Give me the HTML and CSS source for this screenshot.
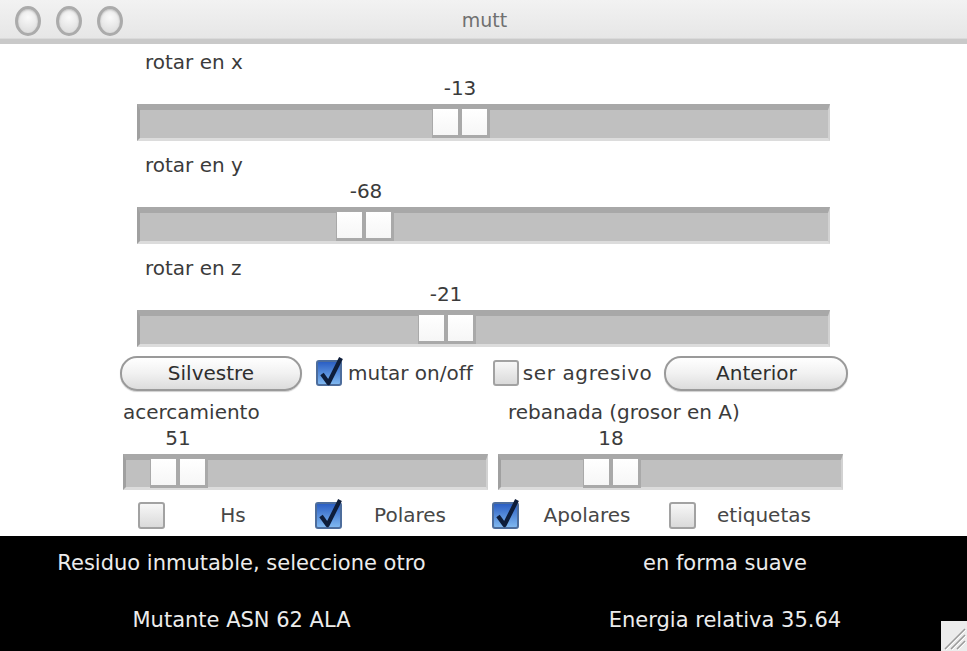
FILE: index.html
```html
<!DOCTYPE html>
<html lang="es">
<head>
<meta charset="utf-8">
<title>mutt</title>
<link rel="stylesheet" href="styles.css">
</head>
<body>
<div class="window">
  <header class="titlebar">
    <div class="lights">
      <span class="light"></span>
      <span class="light"></span>
      <span class="light"></span>
    </div>
    <div class="title">mutt</div>
  </header>

  <main class="content">
    <section class="slider-group wide">
      <div class="label">rotar en x</div>
      <div class="value"><span style="left:323px">-13</span></div>
      <div class="track"><div class="thumb" style="left:292px"><i></i><i></i></div></div>
    </section>
    <section class="slider-group wide">
      <div class="label">rotar en y</div>
      <div class="value"><span style="left:229px">-68</span></div>
      <div class="track"><div class="thumb" style="left:196px"><i></i><i></i></div></div>
    </section>
    <section class="slider-group wide">
      <div class="label">rotar en z</div>
      <div class="value"><span style="left:309px">-21</span></div>
      <div class="track"><div class="thumb" style="left:278px"><i></i><i></i></div></div>
    </section>

    <div class="controls">
      <button class="pill btn-silvestre">Silvestre</button>
      <label class="check-item first">
        <span class="box checked"><svg class="tick" viewBox="0 0 28 34" width="28" height="34"><path d="M6 19 L12.5 28 L25 3" fill="none" stroke="#0e1d3a" stroke-width="4.2" stroke-linejoin="round"/></svg></span>
        <span class="check-text">mutar on/off</span>
      </label>
      <label class="check-item second">
        <span class="box"></span>
        <span class="check-text">ser agresivo</span>
      </label>
      <button class="pill btn-anterior">Anterior</button>
    </div>

    <div class="pair">
      <section class="slider-group left">
        <div class="label">acercamiento</div>
        <div class="value"><span style="left:55px">51</span></div>
        <div class="track"><div class="thumb" style="left:24px"><i></i><i></i></div></div>
      </section>
      <section class="slider-group right">
        <div class="label">rebanada (grosor en A)</div>
        <div class="value"><span style="left:113px">18</span></div>
        <div class="track"><div class="thumb" style="left:82px"><i></i><i></i></div></div>
      </section>
    </div>

    <div class="checks">
      <label class="opt">
        <span class="box"></span>
        <span class="opt-text">Hs</span>
      </label>
      <label class="opt">
        <span class="box checked"><svg class="tick" viewBox="0 0 28 34" width="28" height="34"><path d="M6 19 L12.5 28 L25 3" fill="none" stroke="#0e1d3a" stroke-width="4.2" stroke-linejoin="round"/></svg></span>
        <span class="opt-text">Polares</span>
      </label>
      <label class="opt">
        <span class="box checked"><svg class="tick" viewBox="0 0 28 34" width="28" height="34"><path d="M6 19 L12.5 28 L25 3" fill="none" stroke="#0e1d3a" stroke-width="4.2" stroke-linejoin="round"/></svg></span>
        <span class="opt-text">Apolares</span>
      </label>
      <label class="opt">
        <span class="box"></span>
        <span class="opt-text">etiquetas</span>
      </label>
    </div>
  </main>

  <footer class="status">
    <div class="status-text">Residuo inmutable, seleccione otro</div>
    <div class="status-text">en forma suave</div>
    <div class="status-text">Mutante ASN 62 ALA</div>
    <div class="status-text">Energia relativa 35.64</div>
    <svg class="grip" width="26" height="30" viewBox="0 0 26 30">
      <rect width="26" height="30" fill="#ececec"/>
      <path d="M4 28 L24 8 M10 28 L24 14 M16 28 L24 20" stroke="#9a9a9a" stroke-width="1.5"/>
      <path d="M5 29 L25 9 M11 29 L25 15 M17 29 L25 21" stroke="#ffffff" stroke-width="1"/>
    </svg>
  </footer>
</div>
</body>
</html>
```

FILE: styles.css
```css
html, body {
  margin: 0;
  padding: 0;
  background: #ffffff;
}

body {
  width: 967px;
  height: 651px;
  overflow: hidden;
  font-family: "DejaVu Sans", "Liberation Sans", sans-serif;
  font-size: 20px;
  color: #3b3b3b;
}

.window {
  width: 967px;
  height: 651px;
  display: flex;
  flex-direction: column;
  position: relative;
}

/* ---------- title bar ---------- */
.titlebar {
  height: 39px;
  flex: 0 0 39px;
  background: linear-gradient(#f2f2f2, #e6e6e6);
  border-bottom: 5px solid #c9c9c9;
  box-shadow: inset 0 -1px 0 #dadada;
  display: flex;
  align-items: center;
  position: relative;
}

.lights {
  display: flex;
  gap: 15px;
  padding-left: 15px;
  padding-top: 2px;
}

.light {
  width: 20px;
  height: 24px;
  border-radius: 50%;
  border: 3px solid #ababab;
  background: radial-gradient(circle at 50% 35%, #fafafa, #d8d8d8);
  box-shadow: inset 0 1px 2px #bdbdbd;
}

.title {
  position: absolute;
  left: 0;
  right: 0;
  top: 9px;
  text-align: center;
  color: #707070;
  font-size: 19px;
  padding-left: 2px;
}

/* ---------- content ---------- */
.content {
  flex: 0 0 492px;
  height: 492px;
  background: #ffffff;
  padding-top: 6px;
  box-sizing: border-box;
  display: flex;
  flex-direction: column;
}

.slider-group {
  display: flex;
  flex-direction: column;
}

.slider-group.wide {
  margin-left: 137px;
  width: 693px;
  margin-bottom: 12px;
}

.slider-group.wide .label {
  padding-left: 8px;
}

.label {
  height: 24px;
  line-height: 24px;
  white-space: nowrap;
}

.value {
  height: 24px;
  line-height: 24px;
  margin-top: 2px;
  position: relative;
}

.value span {
  position: absolute;
  top: 0;
  transform: translateX(-50%);
  white-space: nowrap;
}

.track {
  margin-top: 4px;
  height: 37px;
  box-sizing: border-box;
  background: #c0c0c0;
  border-top: 6px solid #a8a8a8;
  border-bottom: 3px solid #dcdcdc;
  border-left: 3px solid #a0a0a0;
  border-right: 2px solid #d2d2d2;
  position: relative;
}

.thumb {
  position: absolute;
  top: -2px;
  height: 30px;
  width: 58px;
  box-sizing: border-box;
  background: #a9a9a9;
  display: flex;
  gap: 4px;
  padding: 1px 3px 3px 1px;
}

.thumb i {
  flex: 1;
  background: linear-gradient(#ffffff, #f6f6f6);
}

/* ---------- controls row ---------- */
.controls {
  margin-top: -4px;
  height: 36px;
  display: flex;
  align-items: center;
  padding-left: 120px;
}

.pill {
  height: 35px;
  border-radius: 17px;
  border: 2px solid #9a9a9a;
  background: linear-gradient(#ffffff 0%, #f1f1f1 50%, #dcdcdc 100%);
  box-shadow: 0 1px 1px #cfcfcf;
  font-family: "DejaVu Sans", "Liberation Sans", sans-serif;
  font-size: 20px;
  color: #2e2e2e;
  padding: 0;
  line-height: 30px;
}

.btn-silvestre {
  width: 182px;
}

.btn-anterior {
  width: 184px;
  margin-left: 12px;
}

.check-item {
  display: flex;
  align-items: center;
}

.check-item.first {
  margin-left: 14px;
}

.check-item.first .check-text {
  margin-left: 6px;
}

.check-item.second {
  margin-left: 20px;
}

.check-item.second .check-text {
  margin-left: 4px;
  letter-spacing: 0.6px;
}

.box {
  width: 26px;
  height: 26px;
  box-sizing: border-box;
  border: 2px solid #a2a2a2;
  border-radius: 3px;
  background: linear-gradient(#f7f7f7, #dadada);
  position: relative;
  flex: 0 0 26px;
}

.box.checked {
  border-color: #4d6d9c;
  background: linear-gradient(#2b5fc4, #7fb7ef);
}

.tick {
  position: absolute;
  left: -2px;
  top: -7px;
}

/* ---------- lower sliders ---------- */
.pair {
  margin-top: 9px;
  display: flex;
  gap: 10px;
  padding-left: 123px;
}

.slider-group.left {
  width: 365px;
}

.slider-group.right {
  width: 345px;
}

.slider-group.right .label {
  padding-left: 10px;
}

.pair .track {
  height: 36px;
}

/* ---------- checkbox row ---------- */
.checks {
  margin-top: 11px;
  display: flex;
  align-items: center;
  gap: 14px;
  padding-left: 138px;
  height: 28px;
}

.opt {
  display: flex;
  align-items: center;
}

.opt .box {
  width: 27px;
  height: 27px;
  flex-basis: 27px;
}

.opt-text {
  width: 136px;
  text-align: center;
  color: #474747;
}

/* ---------- status footer ---------- */
.status {
  flex: 0 0 115px;
  height: 115px;
  background: #000000;
  color: #ececec;
  display: grid;
  grid-template-columns: 483px 484px;
  grid-template-rows: 24px 24px;
  row-gap: 33px;
  padding-top: 15px;
  box-sizing: border-box;
  position: relative;
  font-size: 21px;
}

.status-text {
  text-align: center;
  line-height: 24px;
  white-space: nowrap;
}

.grip {
  position: absolute;
  right: 0;
  bottom: 0;
}
```
